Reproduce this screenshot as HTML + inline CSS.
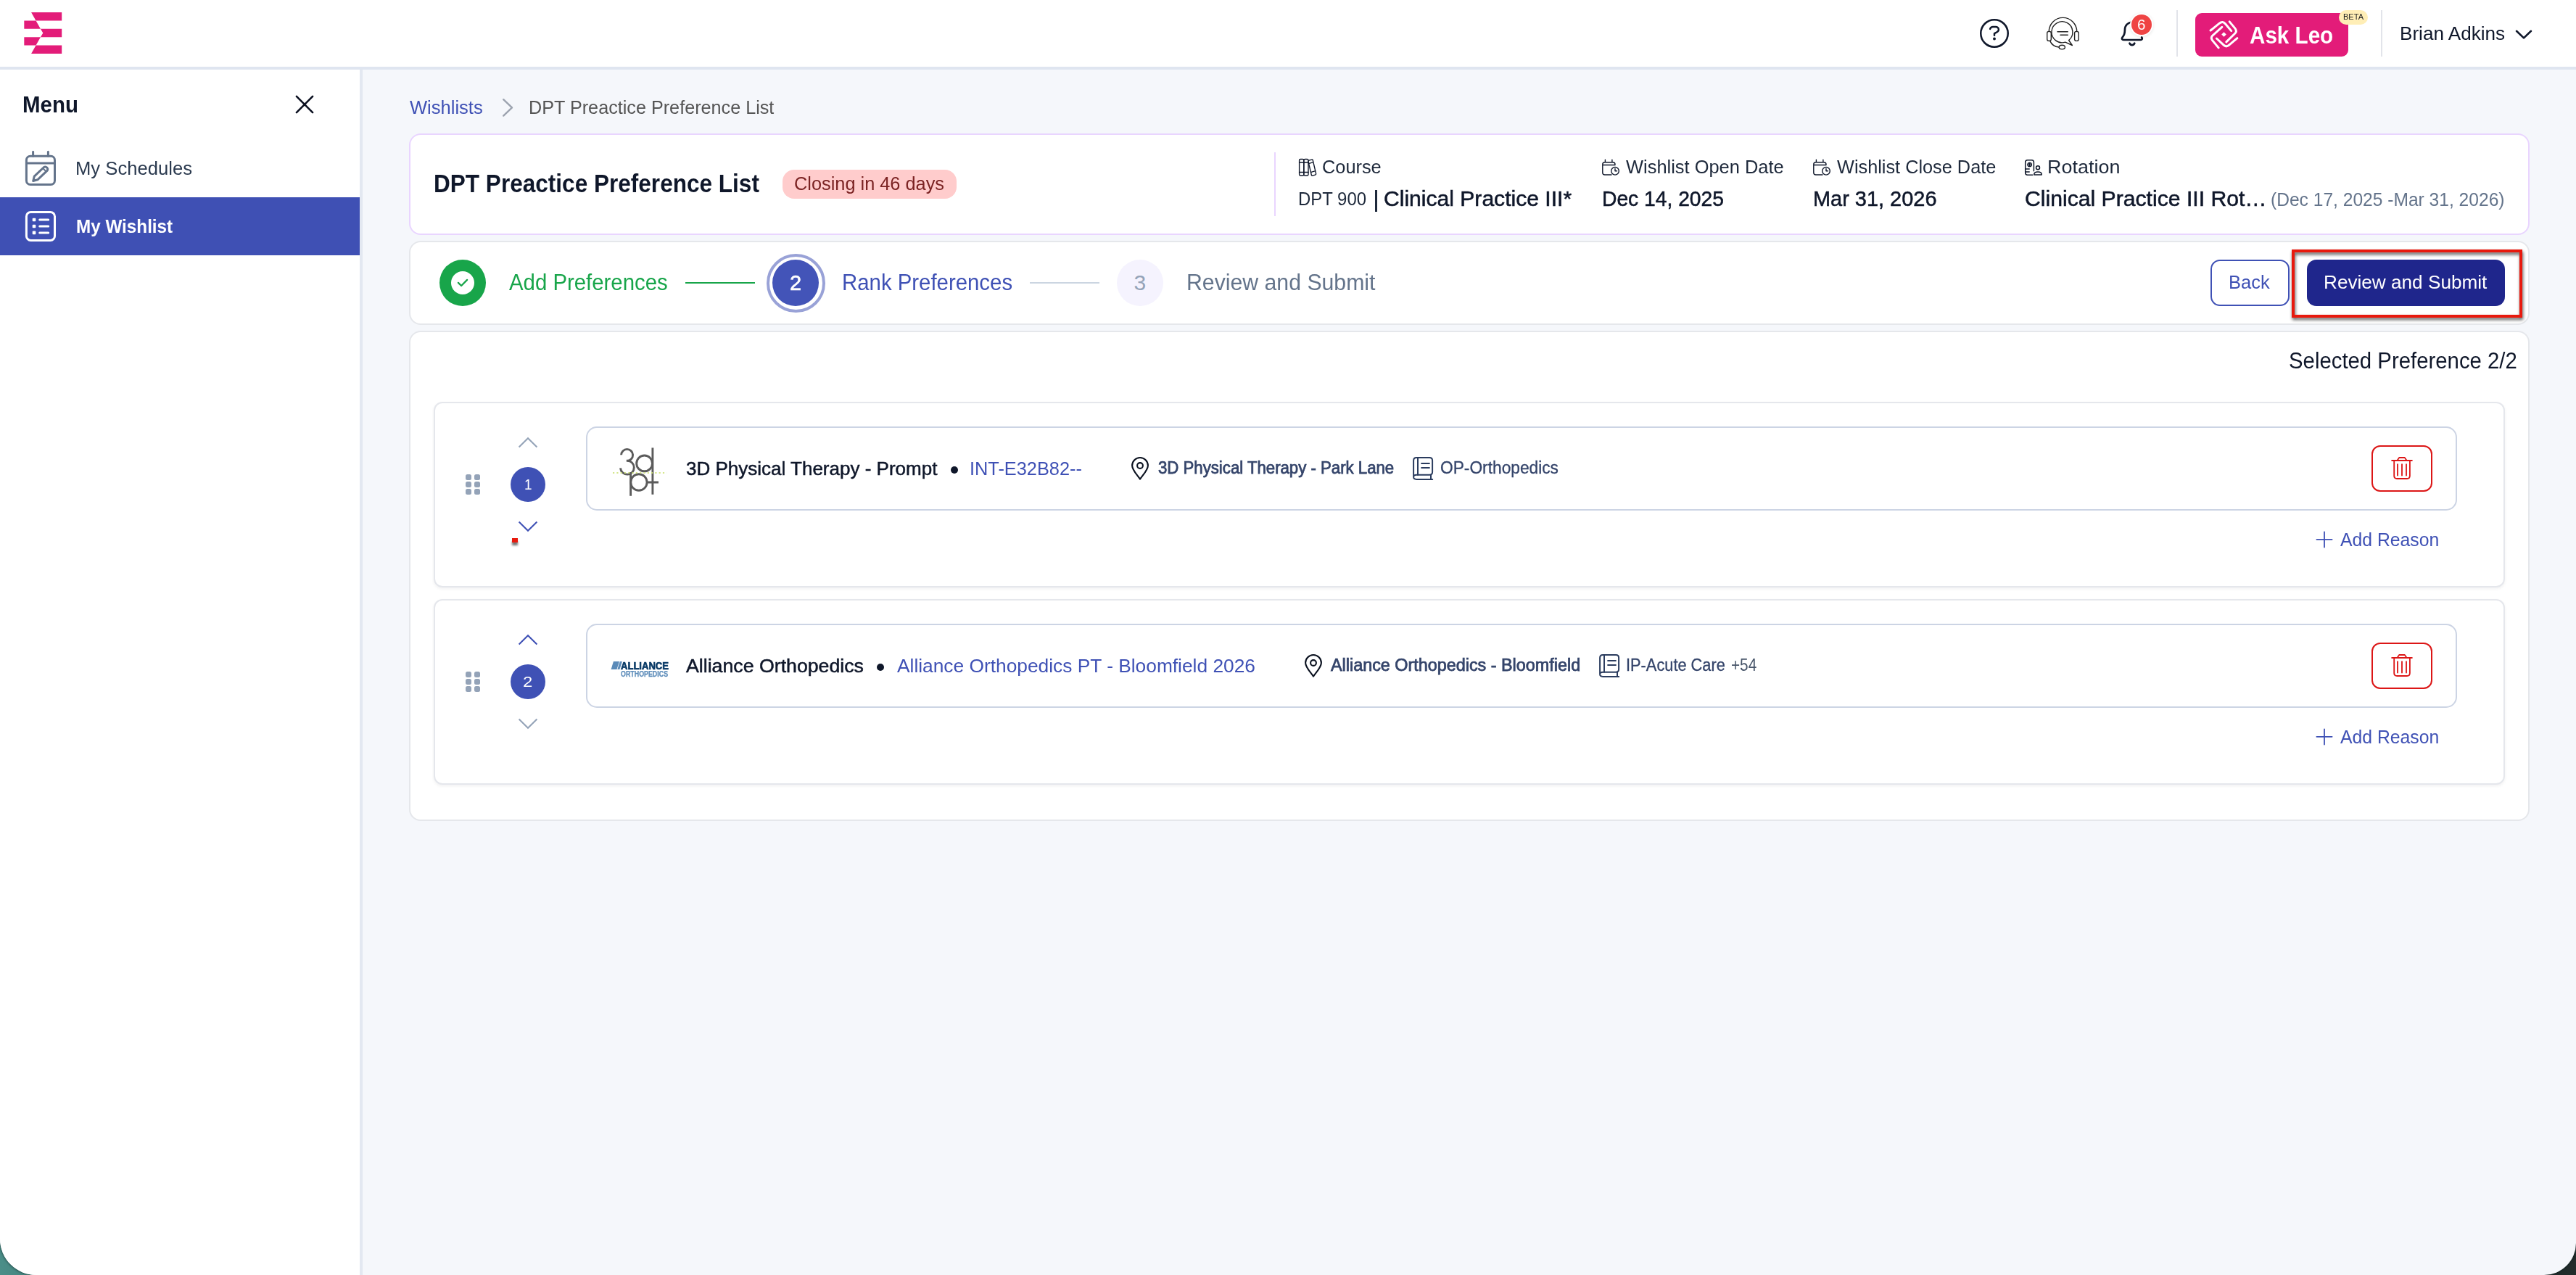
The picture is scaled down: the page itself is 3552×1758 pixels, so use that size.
<!DOCTYPE html>
<html lang="en">
<head>
<meta charset="utf-8">
<title>DPT Preactice Preference List - Wishlist</title>
<style>
html,body{margin:0;padding:0;}
body{width:3552px;height:1758px;overflow:hidden;position:relative;background:linear-gradient(90deg,#4b8e88 0%,#437f7a 2%,#1f2928 98%,#222c2b 100%);font-family:"Liberation Sans",sans-serif;}
#app{position:absolute;left:0;top:0;width:3552px;height:1758px;background:#f5f7fb;border-radius:0 0 44px 50px;overflow:hidden;box-shadow:0 0 3px 1px rgba(10,30,30,.55);}
.abs,.t,#app div,#app svg,#app header,#app nav,#app main,#app section,#app button,#app a{position:absolute;box-sizing:border-box;}
.t{white-space:pre;line-height:1;transform-origin:0 0;font-family:"Liberation Sans",sans-serif;display:block;}
.hdrbg{left:0;top:0;width:3552px;height:96px;background:#fff;border-bottom:4px solid #dfe5f0;}
.sidebg{left:0;top:96px;width:500px;height:1662px;background:#fff;border-right:4px solid #e3e8f1;}
#app .wrap{display:contents;position:static;}
.active{left:0;top:272px;width:496px;height:80px;background:#3f50b4;}
.vdiv{width:2px;background:#e2e4ea;top:14px;height:64px;}
.card{background:#fff;border:2px solid #e5e7eb;border-radius:16px;}
.hcard{left:564px;top:184px;width:2924px;height:140px;border-color:#e9d5ff;}
.scard{left:564px;top:332px;width:2924px;height:116px;}
.mcard{left:564px;top:456px;width:2924px;height:676px;}
.item{left:598px;width:2856px;height:256px;border-radius:12px;border-color:#e5e7ec;box-shadow:0 2px 4px rgba(15,23,42,.06);}
.inner{left:808px;width:2580px;height:116px;border-radius:15px;border-color:#ccd4e4;}
.num{width:48px;height:48px;border-radius:50%;background:#3f51b5;left:704px;}
.del{left:3270px;width:84px;height:64px;border:2px solid #dc1616;border-radius:12px;background:#fff;}
.dot{width:8px;height:8px;border-radius:2.5px;background:#94a3b8;}
button{padding:0;margin:0;font:inherit;}

</style>
</head>
<body>
<div id="app">
<div class="hdrbg"></div><div class="sidebg"></div>
<header class="wrap">
  <svg style="left:33px;top:17px" width="53" height="58" viewBox="33 17 53 58"><g fill="#e31c79">
    <path d="M43.1 17H85.2V28.4H49.5Z"/><path d="M33.3 28.4H49.5L55.9 39.8H33.3Z"/>
    <path d="M55.9 39.8H85.2V51.2H55.9L59.3 45.5Z"/><path d="M33.3 51.2H55.9L49.5 62.6H33.3Z"/>
    <path d="M49.5 62.6H85.2V74H43.1Z"/></g></svg>
  <!-- help -->
  <svg style="left:2726px;top:22px" width="48" height="48" viewBox="2726 22 48 48" fill="none" stroke="#0f172a" stroke-width="2.500" stroke-linecap="round" stroke-linejoin="round">
    <circle cx="2750" cy="46" r="18.750"/>
    <path d="M2744.100 39.900C2744.800 38 2746.200 37.100 2748 37.100L2751.800 37.100C2754.300 37.100 2755.900 38.800 2755.900 40.900C2755.900 43.700 2753 44.500 2750 46L2750 48.700"/>
    <circle cx="2750" cy="53.500" r="1.300" fill="#0f172a" stroke-width="1.300"/>
  </svg>
  <!-- headset -->
  <svg style="left:2818px;top:20px" width="54" height="52" viewBox="2818 20 54 52" fill="none" stroke="#222" stroke-width="1.4" stroke-linecap="round" stroke-linejoin="round">
    <path d="M2825.3 43.500a19.200 19.200 0 0 1 38.400 0"/>
    <rect x="2822.7" y="43.4" width="5.6" height="13" rx="2.4"/>
    <rect x="2860.6" y="43.4" width="5.6" height="13" rx="2.4"/>
    <path d="M2852.6 55.500a14.500 14.500 0 1 0-4.800 2.600l9.600 4.400z" fill="#fff"/>
    <path d="M2837 43.700h14.300M2841 48.300h10.300"/>
    <path d="M2826.800 56.600c2.000 4.500 6.500 7.900 12.300 8.400"/>
    <ellipse cx="2843.300" cy="65.100" rx="4.100" ry="2.800" fill="#fff"/>
  </svg>
  <!-- bell -->
  <svg style="left:2920px;top:24.600px" width="44" height="42" viewBox="2920 24 44 42" fill="none" stroke="#0f172a" stroke-width="2.700" stroke-linecap="round" stroke-linejoin="round">
    <path d="M2940 29.500c-6.400 0.700-10.100 5.000-10.100 11.000 0 5.000-1.400 7.700-3.300 9.800-1.500 1.700-0.600 3.700 1.500 3.700h23.600c2.100 0 2.800-2.000 1.400-3.600"/>
    <path d="M2936.400 58.600c1.700 3.400 5.300 3.400 6.900 0"/>
  </svg>
  <div style="left:2936.600px;top:17.900px;width:32.400px;height:32.400px;border-radius:50%;background:#fff;box-shadow:0 1px 4px rgba(0,0,0,.10)"></div>
  <div style="left:2938.600px;top:19.900px;width:28.400px;height:28.400px;border-radius:50%;background:#ef4444"></div>
  <div class="vdiv" style="left:3001.200px"></div>
  <!-- Ask Leo -->
  <button style="left:3027px;top:18px;width:211px;height:60px;border:0;border-radius:9px;background:#e31c79"></button>
  <svg style="left:3044px;top:26px" width="46" height="44" viewBox="3044 26 46 44" fill="none" stroke="#fff" stroke-width="3" stroke-linecap="round" stroke-linejoin="round">
    <path d="M3048.100 42L3060 32.300Q3064.800 28.300 3068.400 32.700L3076.700 42.600"/>
    <path d="M3074.200 29.900L3081.500 38.600Q3085.100 42.900 3081.900 46L3069.800 57.900"/>
    <path d="M3084.900 52.700L3073.600 62.100Q3069.600 65.500 3066.200 62.200L3056.400 53"/>
    <path d="M3059.100 65.900L3050.600 55.600Q3047.700 52 3050.900 49L3063.800 37.300"/>
    <path d="M3066.500 44.200l3.300 3.300-3.300 3.300-3.300-3.300z" fill="#fff" stroke="none"/>
  </svg>
  <div style="left:3225px;top:14px;width:40.200px;height:19.500px;border-radius:10px;background:#ffeeb6"></div>
  <div class="vdiv" style="left:3283.100px"></div>
  <svg style="left:3465px;top:38px" width="30" height="20" viewBox="3465 38 30 20" fill="none" stroke="#0f172a" stroke-width="2.600" stroke-linecap="round" stroke-linejoin="round"><path d="M3470 42.800l10 9.600 10-9.600"/></svg>
</header>
<nav class="wrap">
  <svg style="left:404px;top:128px" width="32" height="32" viewBox="404 128 32 32" fill="none" stroke="#0b1020" stroke-width="2.600" stroke-linecap="round"><path d="M408.900 132.800l22.200 22.400M431.100 132.800l-22.200 22.400"/></svg>
  <!-- calendar-edit -->
  <svg style="left:33px;top:206px" width="46" height="52" viewBox="33 206 46 52" fill="none" stroke="#64748b" stroke-width="3" stroke-linecap="round" stroke-linejoin="round">
    <rect x="36.400" y="215.300" width="39.100" height="39.200" rx="5.500"/>
    <path d="M36.400 225h39.100M45.600 209.200v6M66.400 209.200v6"/>
    <path d="M45.700 249.500L47.300 243.100L60.600 230.500A3.350 3.350 0 0 1 65.200 235.100L51.800 247.800Z"/>
    <path d="M59.200 232l4.500 4.600" stroke-width="2"/>
  </svg>
  <div class="active"></div>
  <svg style="left:33px;top:289px" width="46" height="46" viewBox="33 289 46 46" fill="none" stroke="#fff" stroke-width="3" stroke-linecap="round" stroke-linejoin="round">
    <rect x="36.400" y="292.400" width="39.100" height="39" rx="6"/>
    <path d="M54.700 303h12M54.700 312h12M54.700 320.900h12"/>
    <g fill="#fff" stroke="none"><rect x="44.700" y="300.700" width="4.600" height="4.600" rx="1"/><rect x="44.700" y="309.700" width="4.600" height="4.600" rx="1"/><rect x="44.700" y="318.600" width="4.600" height="4.600" rx="1"/></g>
  </svg>
</nav>
<main class="wrap">
  <svg style="left:688px;top:132px" width="24" height="32" viewBox="688 132 24 32" fill="none" stroke="#9ca3af" stroke-width="2.400" stroke-linecap="round" stroke-linejoin="round"><path d="M694.200 137.200l11.800 11.200-11.800 11.200"/></svg>
  <section class="card hcard"></section>
  <div style="left:1079px;top:234px;width:240px;height:40px;border-radius:16px;background:#ffcccc"></div>
  <div style="left:1757px;top:210px;width:2px;height:88px;background:#e9d5ff"></div>
  <div style="left:1896px;top:261.500px;width:2.500px;height:30px;background:#1e293b"></div>
  <!-- books -->
  <svg style="left:1788px;top:216px" width="30" height="30" viewBox="1788 216 30 30" fill="none" stroke="#0f172a" stroke-width="1.400" stroke-linejoin="round" stroke-linecap="round">
    <rect x="1791.600" y="219.500" width="6.200" height="22.700" rx="1.600"/><rect x="1797.800" y="219.500" width="6.200" height="22.700" rx="1.600"/>
    <path d="M1791.600 224h12.400M1791.600 237.500h12.400"/>
    <path d="M1805 221.200l3.600-1.100q1.300-0.400 1.700 1.000l4.300 18.300q0.300 1.300-1.000 1.700l-3.600 1.100q-1.300 0.400-1.700-1.000l-4.300-18.300q-0.300-1.300 1.000-1.700z"/>
    <path d="M1805.100 225.400l5.100-1.600M1808 237.400l5.100-1.600"/>
  </svg>
  <!-- cal clock 1 -->
  <svg style="left:2206px;top:218px" width="30" height="28" viewBox="2206 218 30 28" fill="none" stroke="#0f172a" stroke-width="1.400" stroke-linejoin="round" stroke-linecap="round">
    <path d="M2222 241h-9.200q-3 0-3-3v-11.300q0-3 3-3h11.200q3 0 3 3v0.800h-17.200"/>
    <path d="M2213.400 220.300v3M2222.900 220.300v3"/>
    <circle cx="2227" cy="235.800" r="5.300"/><path d="M2227 232.600v3.200h2.500"/>
  </svg>
  <svg style="left:2496.600px;top:218px" width="30" height="28" viewBox="2206 218 30 28" fill="none" stroke="#0f172a" stroke-width="1.400" stroke-linejoin="round" stroke-linecap="round">
    <path d="M2222 241h-9.200q-3 0-3-3v-11.300q0-3 3-3h11.200q3 0 3 3v0.800h-17.200"/>
    <path d="M2213.400 220.300v3M2222.900 220.300v3"/>
    <circle cx="2227" cy="235.800" r="5.300"/><path d="M2227 232.600v3.200h2.500"/>
  </svg>
  <!-- rotation -->
  <svg style="left:2789px;top:217px" width="30" height="28" viewBox="2789 217 30 28" fill="none" stroke="#0f172a" stroke-width="1.500" stroke-linejoin="round" stroke-linecap="round">
    <path d="M2802.700 241.200h-7q-3 0-3-3v-14.400q0-3 3-3h5.700q3 0 3 3v12"/>
    <path d="M2792.700 232.900h5.500M2792.700 237h5.500"/>
    <circle cx="2798.600" cy="227" r="2.600"/><path d="M2798.600 224.400v5.200M2796 227h5.200" stroke-width="1.200"/>
    <circle cx="2810" cy="231.300" r="2.500"/>
    <path d="M2804.800 241q-0.600-3.900 5.200-3.900t5.200 3.900z"/>
  </svg>
  <section class="card scard"></section>
  <div style="left:606px;top:358px;width:64px;height:64px;border-radius:50%;background:#18a54a"></div>
  <div style="left:622px;top:374px;width:32px;height:32px;border-radius:50%;background:#fff"></div>
  <svg style="left:628px;top:380px" width="20" height="20" viewBox="628 380 20 20" fill="none" stroke="#18a54a" stroke-width="2.300" stroke-linecap="round" stroke-linejoin="round"><path d="M631.900 389.900l4.200 4.100 8-8.100"/></svg>
  <div style="left:945px;top:389px;width:96px;height:2px;background:#18a54a"></div>
  <div style="left:1056.600px;top:349.500px;width:81px;height:81px;border-radius:50%;border:4px solid #99a2d7;background:#fff"></div>
  <div style="left:1065px;top:358px;width:64px;height:64px;border-radius:50%;background:#4354b8"></div>
  <div style="left:1420px;top:389px;width:96px;height:2px;background:#cbd5e1"></div>
  <div style="left:1540px;top:358px;width:64px;height:64px;border-radius:50%;background:#f5f3fe"></div>
  <button style="left:3048px;top:358px;width:109px;height:64px;border:2px solid #3f51b5;border-radius:13px;background:#fff"></button>
  <button style="left:3181px;top:358px;width:273px;height:64px;border:0;border-radius:13px;background:#1f268c"></button>
  <div style="left:3160px;top:344px;width:318px;height:94px;border:4px solid #e8190d;filter:drop-shadow(1px 3px 2px rgba(0,0,0,.65));"></div>
  <section class="card mcard"></section>

  <!-- row 1 -->
  <div class="card item" style="top:554px"></div>
  <div class="card inner" style="top:588px"></div>
  <div class="num" style="top:644px"></div>
  <button class="del" style="top:614px"></button>
  <!-- row 2 -->
  <div class="card item" style="top:826px"></div>
  <div class="card inner" style="top:860px"></div>
  <div class="num" style="top:916px"></div>
  <button class="del" style="top:886px"></button>
  <div style="left:706px;top:742px;width:8px;height:6px;background:#e8190d;box-shadow:0 4px 3px rgba(0,0,0,.55)"></div>
</main>
<div class="dot" style="left:642.0px;top:654.3px"></div>
<div class="dot" style="left:642.0px;top:664.4px"></div>
<div class="dot" style="left:642.0px;top:674.4px"></div>
<div class="dot" style="left:654.0px;top:654.3px"></div>
<div class="dot" style="left:654.0px;top:664.4px"></div>
<div class="dot" style="left:654.0px;top:674.4px"></div>
<svg style="left:712px;top:598.0px" width="32" height="24" viewBox="712 598 32 24" fill="none" stroke="#94a3b8" stroke-width="2.100" stroke-linecap="butt" stroke-linejoin="miter"><path d="M715.600 616.400L728 604.300L740.400 616.400"/></svg>
<svg style="left:712px;top:714.0px" width="32" height="24" viewBox="712 714 32 24" fill="none" stroke="#3f51b5" stroke-width="2.100" stroke-linecap="butt" stroke-linejoin="miter"><path d="M715.600 719.600L728 731.700L740.400 719.600"/></svg>
<svg style="left:1556.0px;top:626.0px" width="32" height="40" viewBox="1556 626 32 40" fill="none" stroke="#0b1220" stroke-width="2.100" stroke-linejoin="round"><path d="M1572 660.600c-5.500-7.600-10.900-13.100-10.900-18.700a10.900 10.900 0 0 1 21.800 0c0 5.600-5.400 11.100-10.900 18.700z"/><circle cx="1572" cy="642" r="3.900"/></svg>
<svg style="left:1945.0px;top:627.0px" width="34" height="38" viewBox="1945 627 34 38" fill="none" stroke="#2b3c5e" stroke-width="2" stroke-linejoin="round" stroke-linecap="round"><path d="M1949.100 657.500v-22.500q0-4 4-4h18q4 0 4 4v15.700q0 4-4 4h-17.900q-4.100 0-4.100 3.100t4.100 3.100h22"/><path d="M1955 631v23.700M1973 654.700v6.200M1960.100 639h10.800M1960.100 644.900h10.800"/></svg>
<svg style="left:3294px;top:626.0px" width="36" height="40" viewBox="3294 626 36 40" fill="none" stroke="#dc1616" stroke-width="1.800" stroke-linejoin="round" stroke-linecap="round"><path d="M3298.100 635h27.800M3305.400 635l2.800-4h7.600l2.800 4M3301.200 635v21q0 4 4 4h13.700q4 0 4-4v-21M3306 640.200v15.400M3312 640.200v15.400M3318 640.200v15.400"/></svg>
<svg style="left:3190px;top:730.0px" width="30" height="28" viewBox="3190 730 30 28" fill="none" stroke="#3f51b5" stroke-width="1.800" stroke-linecap="round"><path d="M3194.400 743.800h21.200M3205 733.300v21.200"/></svg>
<div class="dot" style="left:642.0px;top:926.3px"></div>
<div class="dot" style="left:642.0px;top:936.4px"></div>
<div class="dot" style="left:642.0px;top:946.4px"></div>
<div class="dot" style="left:654.0px;top:926.3px"></div>
<div class="dot" style="left:654.0px;top:936.4px"></div>
<div class="dot" style="left:654.0px;top:946.4px"></div>
<svg style="left:712px;top:870.0px" width="32" height="24" viewBox="712 598 32 24" fill="none" stroke="#3f51b5" stroke-width="2.100" stroke-linecap="butt" stroke-linejoin="miter"><path d="M715.600 616.400L728 604.300L740.400 616.400"/></svg>
<svg style="left:712px;top:986.0px" width="32" height="24" viewBox="712 714 32 24" fill="none" stroke="#94a3b8" stroke-width="2.100" stroke-linecap="butt" stroke-linejoin="miter"><path d="M715.600 719.600L728 731.700L740.400 719.600"/></svg>
<svg style="left:1795.3px;top:898.0px" width="32" height="40" viewBox="1556 626 32 40" fill="none" stroke="#0b1220" stroke-width="2.100" stroke-linejoin="round"><path d="M1572 660.600c-5.500-7.600-10.900-13.100-10.900-18.700a10.900 10.900 0 0 1 21.800 0c0 5.600-5.400 11.100-10.900 18.700z"/><circle cx="1572" cy="642" r="3.900"/></svg>
<svg style="left:2201.7px;top:899.0px" width="34" height="38" viewBox="1945 627 34 38" fill="none" stroke="#2b3c5e" stroke-width="2" stroke-linejoin="round" stroke-linecap="round"><path d="M1949.100 657.500v-22.500q0-4 4-4h18q4 0 4 4v15.700q0 4-4 4h-17.900q-4.100 0-4.100 3.100t4.100 3.100h22"/><path d="M1955 631v23.700M1973 654.700v6.200M1960.100 639h10.800M1960.100 644.900h10.800"/></svg>
<svg style="left:3294px;top:898.0px" width="36" height="40" viewBox="3294 626 36 40" fill="none" stroke="#dc1616" stroke-width="1.800" stroke-linejoin="round" stroke-linecap="round"><path d="M3298.100 635h27.800M3305.400 635l2.800-4h7.600l2.800 4M3301.200 635v21q0 4 4 4h13.700q4 0 4-4v-21M3306 640.200v15.400M3312 640.200v15.400M3318 640.200v15.400"/></svg>
<svg style="left:3190px;top:1002.0px" width="30" height="28" viewBox="3190 730 30 28" fill="none" stroke="#3f51b5" stroke-width="1.800" stroke-linecap="round"><path d="M3194.400 743.800h21.200M3205 733.300v21.200"/></svg>
<div style="left:1311px;top:643px;width:10px;height:10px;border-radius:50%;background:#0f172a"></div>
<div style="left:1209px;top:915px;width:10px;height:10px;border-radius:50%;background:#0f172a"></div>
<svg style="left:840px;top:612px" width="84" height="76" viewBox="840 612 84 76" fill="none" stroke="#5b5b5b" stroke-width="2.900">
<path d="M856.600 627.200a8 8 0 1 1 8.600 8.200"/><path d="M863.800 635.300h1.200a9.400 9.400 0 1 1-9.500 10.100"/>
<circle cx="888.600" cy="638.900" r="10.900"/><path d="M899.900 617.400v64.400"/>
<circle cx="880.900" cy="665" r="11.200"/><path d="M869.600 651v32.700M893 665h15"/>
<path d="M845 651.900h74.300" stroke="#cfe37a" stroke-width="2" stroke-dasharray="2.200 3.100" opacity="0.85"/>
</svg>
<svg style="left:840px;top:908px" width="86" height="28" viewBox="840 908 86 28">
<path d="M845.900 912h8.100l-3.500 10.900h-7.900z" fill="#5b8bb9"/><path d="M854.800 912h3.100l-3.500 10.900h-3.100z" fill="#5b8bb9"/>
</svg>
</div>

<div id="texts">
<span class="t " style="left:31.37px;top:128.7px;font-size:30.5px;color:#0f172a;transform:scaleX(0.9658);font-weight:700;">Menu</span>
<span class="t " style="left:103.67px;top:218.7px;font-size:26.5px;color:#2b3a4f;transform:scaleX(0.9672);">My Schedules</span>
<span class="t " style="left:104.69px;top:299.0px;font-size:26.5px;color:#ffffff;transform:scaleX(0.9150);font-weight:700;">My Wishlist</span>
<span class="t " style="left:2947.02px;top:23.4px;font-size:21.0px;color:#ffffff;transform:scaleX(0.9800);">6</span>
<span class="t " style="left:3102.40px;top:32.9px;font-size:32.5px;color:#ffffff;transform:scaleX(0.9110);font-weight:700;">Ask Leo</span>
<span class="t " style="left:3230.90px;top:18.2px;font-size:11.5px;color:#222222;transform:scaleX(0.9589);">BETA</span>
<span class="t " style="left:3308.73px;top:32.9px;font-size:26.5px;color:#0f172a;transform:scaleX(0.9849);">Brian Adkins</span>
<span class="t " style="left:565.00px;top:135.0px;font-size:26.5px;color:#3f51b5;transform:scaleX(0.9638);">Wishlists</span>
<span class="t " style="left:729.10px;top:135.0px;font-size:26.5px;color:#555555;transform:scaleX(0.9506);">DPT Preactice Preference List</span>
<span class="t " style="left:597.60px;top:235.4px;font-size:35px;color:#0f172a;transform:scaleX(0.9014);font-weight:700;">DPT Preactice Preference List</span>
<span class="t " style="left:1095.44px;top:240.4px;font-size:26.5px;color:#7b2323;transform:scaleX(0.9559);">Closing in 46 days</span>
<span class="t " style="left:1822.64px;top:216.5px;font-size:26.5px;color:#1e293b;transform:scaleX(0.9559);">Course</span>
<span class="t " style="left:1790.19px;top:260.6px;font-size:26.5px;color:#1e293b;transform:scaleX(0.9034);">DPT 900</span>
<span class="t " style="left:1908.00px;top:258.6px;font-size:30px;color:#0f172a;transform:scaleX(1.0026);-webkit-text-stroke:0.55px #0f172a;">Clinical Practice III*</span>
<span class="t " style="left:2242.00px;top:216.5px;font-size:26.5px;color:#1e293b;transform:scaleX(0.9599);">Wishlist Open Date</span>
<span class="t " style="left:2209.42px;top:258.6px;font-size:30px;color:#0f172a;transform:scaleX(0.9410);-webkit-text-stroke:0.55px #0f172a;">Dec 14, 2025</span>
<span class="t " style="left:2533.00px;top:216.5px;font-size:26.5px;color:#1e293b;transform:scaleX(0.9546);">Wishlist Close Date</span>
<span class="t " style="left:2499.57px;top:258.6px;font-size:30px;color:#0f172a;transform:scaleX(0.9644);-webkit-text-stroke:0.55px #0f172a;">Mar 31, 2026</span>
<span class="t " style="left:2823.37px;top:216.5px;font-size:26.5px;color:#1e293b;transform:scaleX(1.0170);">Rotation</span>
<span class="t " style="left:2791.99px;top:258.6px;font-size:30px;color:#0f172a;transform:scaleX(1.0053);-webkit-text-stroke:0.55px #0f172a;">Clinical Practice III Rot…</span>
<span class="t " style="left:3131.07px;top:261.6px;font-size:26.5px;color:#64748b;transform:scaleX(0.9277);">(Dec 17, 2025 -Mar 31, 2026)</span>
<span class="t " style="left:702.10px;top:373.8px;font-size:31px;color:#18a54a;transform:scaleX(0.9470);">Add Preferences</span>
<span class="t " style="left:1089.23px;top:374.8px;font-size:30px;color:#ffffff;transform:scaleX(0.9667);-webkit-text-stroke:0.6px #ffffff;">2</span>
<span class="t " style="left:1161.01px;top:373.8px;font-size:31px;color:#3f51b5;transform:scaleX(0.9474);">Rank Preferences</span>
<span class="t " style="left:1563.50px;top:375.2px;font-size:30px;color:#94a3b8;transform:scaleX(1.0000);">3</span>
<span class="t " style="left:1635.55px;top:373.8px;font-size:31px;color:#64748b;transform:scaleX(0.9753);">Review and Submit</span>
<span class="t " style="left:3073.07px;top:376.2px;font-size:26.5px;color:#3f51b5;transform:scaleX(0.9642);">Back</span>
<span class="t " style="left:3204.03px;top:376.2px;font-size:26.5px;color:#ffffff;transform:scaleX(0.9870);">Review and Submit</span>
<span class="t " style="left:3155.55px;top:482.1px;font-size:31px;color:#0f172a;transform:scaleX(0.9465);">Selected Preference 2/2</span>
<span class="t " style="left:722.70px;top:657.2px;font-size:21px;color:#ffffff;transform:scaleX(0.9000);">1</span>
<span class="t " style="left:945.72px;top:632.6px;font-size:26.5px;color:#0f172a;transform:scaleX(0.9813);-webkit-text-stroke:0.5px #0f172a;">3D Physical Therapy - Prompt</span>
<span class="t " style="left:1337.49px;top:632.6px;font-size:26.5px;color:#3f51b5;transform:scaleX(0.9562);">INT-E32B82--</span>
<span class="t " style="left:1596.80px;top:633.7px;font-size:23px;color:#34446a;transform:scaleX(0.9647);-webkit-text-stroke:0.75px #34446a;">3D Physical Therapy - Park Lane</span>
<span class="t " style="left:1985.81px;top:633.7px;font-size:23px;color:#34446a;transform:scaleX(0.9884);-webkit-text-stroke:0.3px #34446a;">OP-Orthopedics</span>
<span class="t " style="left:3227.00px;top:730.6px;font-size:26.5px;color:#3f51b5;transform:scaleX(0.9344);">Add Reason</span>
<span class="t " style="left:721.26px;top:929.2px;font-size:21px;color:#ffffff;transform:scaleX(1.1400);">2</span>
<span class="t " style="left:946.00px;top:904.6px;font-size:26.5px;color:#0f172a;transform:scaleX(1.0079);-webkit-text-stroke:0.5px #0f172a;">Alliance Orthopedics</span>
<span class="t " style="left:1236.50px;top:904.6px;font-size:26.5px;color:#3f51b5;transform:scaleX(0.9931);">Alliance Orthopedics PT - Bloomfield 2026</span>
<span class="t " style="left:1835.00px;top:905.7px;font-size:23px;color:#34446a;transform:scaleX(1.0158);-webkit-text-stroke:0.75px #34446a;">Alliance Orthopedics - Bloomfield</span>
<span class="t " style="left:2241.91px;top:905.7px;font-size:23px;color:#34446a;transform:scaleX(0.9474);-webkit-text-stroke:0.3px #34446a;">IP-Acute Care</span>
<span class="t " style="left:2387.10px;top:905.7px;font-size:23px;color:#475569;transform:scaleX(0.9026);">+54</span>
<span class="t " style="left:3227.00px;top:1002.6px;font-size:26.5px;color:#3f51b5;transform:scaleX(0.9344);">Add Reason</span>
<span class="t " style="left:856.20px;top:909.8px;font-size:15.3px;color:#093a66;transform:scaleX(0.8532);font-weight:700;-webkit-text-stroke:0.7px #093a66;">ALLIANCE</span>
<span class="t " style="left:856.00px;top:923.7px;font-size:10.6px;color:#5b8bb9;transform:scaleX(0.8373);font-weight:700;-webkit-text-stroke:0.25px #5b8bb9;">ORTHOPEDICS</span>
</div>
</body>
</html>
